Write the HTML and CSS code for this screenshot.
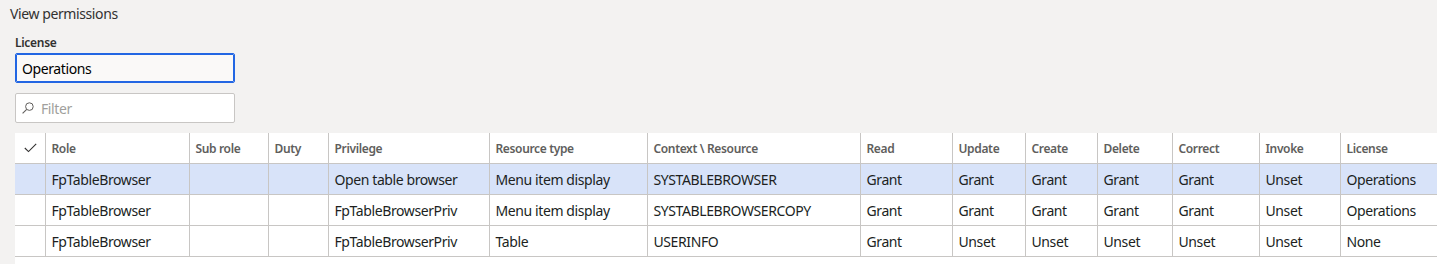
FILE: index.html
```html
<!DOCTYPE html>
<html lang="en">
  <head>
    <meta charset="UTF-8" />
    <meta name="viewport" content="width=device-width, initial-scale=1.0" />
    <title>View permissions</title>
    <link rel="stylesheet" href="styles.css">
  </head>
  <body>
    <div class="page-title">View permissions</div>

    <div class="filters">
      <label class="field-label" for="license">License</label>
      <input type="text" id="license" class="field-input focused" value="Operations" />

      <div class="search-box">
        <svg class="search-icon" width="12" height="12" viewBox="0 0 12 12">
          <circle cx="7.4" cy="4.6" r="3.8" fill="none" stroke="#605e5c" stroke-width="1" />
          <line x1="4.7" y1="7.3" x2="0.6" y2="11.4" stroke="#605e5c" stroke-width="1.1" />
        </svg>
        <input type="text" class="search-input" placeholder="Filter" />
      </div>
    </div>

    <div class="grid-wrap">
      <table class="grid">
        <colgroup>
          <col style="width: 30px" />
          <col style="width: 144px" />
          <col style="width: 79px" />
          <col style="width: 60px" />
          <col style="width: 161px" />
          <col style="width: 158px" />
          <col style="width: 213px" />
          <col style="width: 92px" />
          <col style="width: 73px" />
          <col style="width: 72px" />
          <col style="width: 75px" />
          <col style="width: 87px" />
          <col style="width: 81px" />
          <col style="width: 140px" />
        </colgroup>
        <thead>
          <tr>
            <th class="check-col">
              <svg width="13" height="10" viewBox="0 0 13 10">
                <polyline points="0.8,5 4.5,8.6 12.2,0.8" fill="none" stroke="#323130" stroke-width="1.1" />
              </svg>
            </th>
            <th>Role</th>
            <th>Sub role</th>
            <th>Duty</th>
            <th>Privilege</th>
            <th>Resource type</th>
            <th>Context \ Resource</th>
            <th>Read</th>
            <th>Update</th>
            <th>Create</th>
            <th>Delete</th>
            <th>Correct</th>
            <th>Invoke</th>
            <th>License</th>
          </tr>
        </thead>
        <tbody>
          <tr class="selected">
            <td class="check-col"></td>
            <td>FpTableBrowser</td>
            <td></td>
            <td></td>
            <td>Open table browser</td>
            <td>Menu item display</td>
            <td>SYSTABLEBROWSER</td>
            <td>Grant</td>
            <td>Grant</td>
            <td>Grant</td>
            <td>Grant</td>
            <td>Grant</td>
            <td>Unset</td>
            <td>Operations</td>
          </tr>
          <tr>
            <td class="check-col"></td>
            <td>FpTableBrowser</td>
            <td></td>
            <td></td>
            <td>FpTableBrowserPriv</td>
            <td>Menu item display</td>
            <td>SYSTABLEBROWSERCOPY</td>
            <td>Grant</td>
            <td>Grant</td>
            <td>Grant</td>
            <td>Grant</td>
            <td>Grant</td>
            <td>Unset</td>
            <td>Operations</td>
          </tr>
          <tr>
            <td class="check-col"></td>
            <td>FpTableBrowser</td>
            <td></td>
            <td></td>
            <td>FpTableBrowserPriv</td>
            <td>Table</td>
            <td>USERINFO</td>
            <td>Grant</td>
            <td>Unset</td>
            <td>Unset</td>
            <td>Unset</td>
            <td>Unset</td>
            <td>Unset</td>
            <td>None</td>
          </tr>
        </tbody>
      </table>
    </div>
  </body>
</html>
```

FILE: styles.css
```css
html,
body {
  overflow: hidden;
}

body {
  margin: 0;
  height: 264px;
  background-color: #f3f2f1;
  font-family: "Segoe UI", "Noto Sans", sans-serif;
  font-size: 14px;
  letter-spacing: -0.4px;
  color: #201f1e;
}

.page-title {
  padding: 4px 10px 0;
  margin-bottom: 10px;
  line-height: 20px;
  font-size: 14px;
  color: #323130;
}

.filters {
  padding: 0 15px;
  width: 220px;
}

.field-label {
  display: block;
  line-height: 18px;
  font-size: 12px;
  font-weight: 600;
  letter-spacing: -0.3px;
  color: #323130;
  margin-bottom: 1px;
}

.field-input {
  display: block;
  box-sizing: border-box;
  width: 220px;
  height: 30px;
  padding: 0 6px;
  border: 1px solid #c8c6c4;
  border-radius: 2px;
  background-color: #faf9f8;
  font-family: inherit;
  font-size: 14px;
  letter-spacing: -0.4px;
  color: #000;
}

.field-input.focused {
  border-color: #2266e3;
  outline: 1px solid #2266e3;
  outline-offset: -2px;
}

.search-box {
  display: flex;
  align-items: center;
  box-sizing: border-box;
  width: 220px;
  height: 30px;
  margin-top: 10px;
  padding: 0 6px;
  border: 1px solid #c8c6c4;
  border-radius: 2px;
  background-color: #fff;
}

.search-icon {
  flex: none;
  margin-right: 7px;
}

.search-input {
  flex: 1;
  border: none;
  outline: none;
  padding: 0;
  background: transparent;
  font-family: inherit;
  font-size: 14px;
  letter-spacing: -0.4px;
}

.search-input::placeholder {
  color: #a19f9d;
}

.grid-wrap {
  margin: 10px 0 0 15px;
  height: 131px;
  overflow: hidden;
  background-color: #fff;
}

.grid {
  table-layout: fixed;
  border-collapse: collapse;
  width: 1465px;
}

.grid th,
.grid td {
  padding: 0 6px;
  border-left: 1px solid #c8c6c4;
  border-bottom: 1px solid #c8c6c4;
  text-align: left;
  white-space: nowrap;
  overflow: hidden;
}

.grid th {
  height: 30px;
  font-size: 12px;
  font-weight: 600;
  letter-spacing: -0.35px;
  color: #605e5c;
}

.grid td {
  height: 30px;
  color: #201f1e;
}

.grid .check-col {
  border-left: none;
  padding: 0 0 0 9px;
}

.grid .selected td {
  background-color: #d8e3f9;
}
```
